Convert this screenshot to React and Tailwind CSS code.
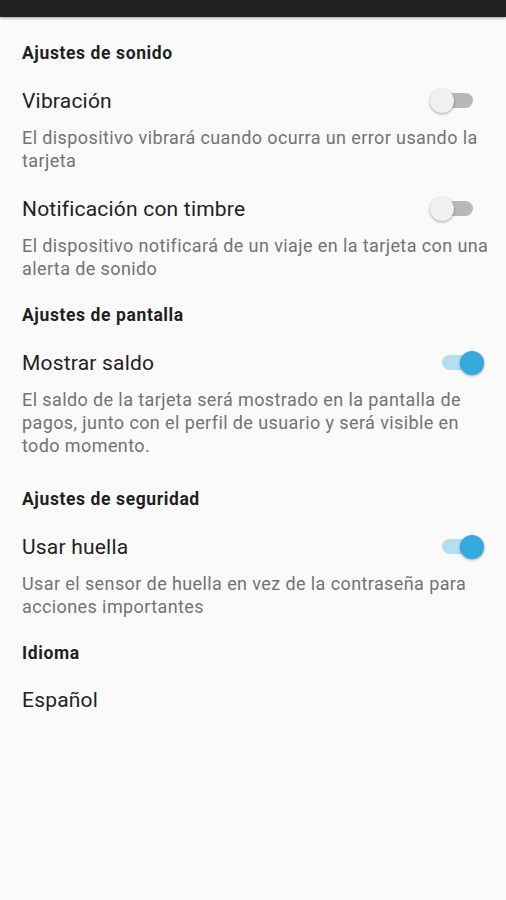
import React from 'react';

function Switch({ on }) {
  return (
    <div className="relative w-[54px] h-[26px] shrink-0">
      <div
        className={`absolute top-[5px] h-[15px] w-[36px] rounded-full ${
          on ? 'right-[6px] bg-[#b5def2]' : 'left-[7px] bg-[#b8b8b8]'
        }`}
      />
      <div
        className={`absolute top-[1px] h-[24px] w-[24px] rounded-full shadow-[0_1px_3px_rgba(0,0,0,0.35)] ${
          on ? 'right-0 bg-[#33a9de]' : 'left-0 bg-[#f1f1f1]'
        }`}
      />
    </div>
  );
}

function Header({ children, className = '' }) {
  return (
    <div className={`text-[17.5px] leading-[20px] tracking-[0.6px] font-bold text-[#1f1f1f] ${className}`}>
      {children}
    </div>
  );
}

function Item({ title, desc, toggle, on, className = '' }) {
  return (
    <div className={className}>
      <div className="flex items-center justify-between h-[24px]">
        <span className="text-[21px] leading-[24px] tracking-[0.2px] text-[#222222]">{title}</span>
        {toggle && <Switch on={on} />}
      </div>
      {desc && (
        <p className="mt-[13px] mr-[-6px] text-[18px] leading-[23px] tracking-[0.4px] text-[#737373]">{desc}</p>
      )}
    </div>
  );
}

export default function App() {
  return (
    <div className="w-[506px] h-[900px] bg-[#fafafa] overflow-hidden" style={{ fontFamily: 'Roboto, "Noto Sans", sans-serif' }}>
      <div className="h-[17px] bg-[#222222] shadow-[0_1px_3px_rgba(0,0,0,0.4)]" />
      <div className="pl-[22px] pr-[22px] pt-[26px]">
        <Header>Ajustes de sonido</Header>
        <Item
          className="mt-[26px]"
          title="Vibración"
          toggle
          on={false}
          desc="El dispositivo vibrará cuando ocurra un error usando la tarjeta"
        />
        <Item
          className="mt-[25px]"
          title="Notificación con timbre"
          toggle
          on={false}
          desc="El dispositivo notificará de un viaje en la tarjeta con una alerta de sonido"
        />

        <Header className="mt-[25px]">Ajustes de pantalla</Header>
        <Item
          className="mt-[26px]"
          title="Mostrar saldo"
          toggle
          on
          desc="El saldo de la tarjeta será mostrado en la pantalla de pagos, junto con el perfil de usuario y será visible en todo momento."
        />

        <Header className="mt-[32px]">Ajustes de seguridad</Header>
        <Item
          className="mt-[26px]"
          title="Usar huella"
          toggle
          on
          desc="Usar el sensor de huella en vez de la contraseña para acciones importantes"
        />

        <Header className="mt-[25px]">Idioma</Header>
        <Item className="mt-[25px]" title="Español" />
      </div>
    </div>
  );
}
